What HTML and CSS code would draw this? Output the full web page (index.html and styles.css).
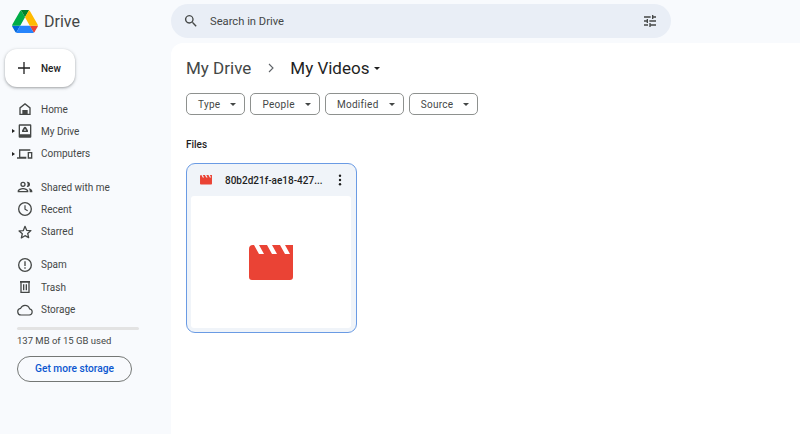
FILE: index.html
```html
<!DOCTYPE html>
<html lang="en">
<head>
<meta charset="utf-8">
<title>My Videos - Google Drive</title>
<link rel="stylesheet" href="styles.css">
</head>
<body>
<div class="app">
  <aside class="sidebar">
    <div class="brand">
      <svg class="logo" viewBox="0 0 87.3 78" width="26" height="23">
        <path d="M6.6 66.85l3.85 6.65c.8 1.4 1.95 2.5 3.3 3.3L27.5 53H0c0 1.55.4 3.1 1.2 4.5z" fill="#0066da"/>
        <path d="M43.65 25L29.9 1.2c-1.35.8-2.5 1.9-3.3 3.3L1.2 48.5C.4 49.9 0 51.45 0 53h27.5z" fill="#00ac47"/>
        <path d="M73.55 76.8c1.35-.8 2.5-1.9 3.3-3.3l1.6-2.75L86.1 57.5c.8-1.4 1.2-2.95 1.2-4.5H59.8l5.85 11.5z" fill="#ea4335"/>
        <path d="M43.65 25L57.4 1.2C56.05.4 54.5 0 52.9 0H34.4c-1.6 0-3.15.45-4.5 1.2z" fill="#00832d"/>
        <path d="M59.8 53H27.5L13.75 76.8c1.35.8 2.9 1.2 4.5 1.2h50.8c1.6 0 3.15-.45 4.5-1.2z" fill="#2684fc"/>
        <path d="M73.4 26.5L60.7 4.5c-.8-1.4-1.95-2.5-3.3-3.3L43.65 25 59.8 53h27.45c0-1.55-.4-3.1-1.2-4.5z" fill="#ffba00"/>
      </svg>
      <span class="brand-name">Drive</span>
    </div>
    <button class="new-btn">
      <svg viewBox="0 0 14 14" width="14" height="14"><path d="M7 1v12M1 7h12" stroke="#1f1f1f" stroke-width="1.3" fill="none"/></svg>
      <span>New</span>
    </button>
    <nav class="nav">
      <div class="nav-group">
        <div class="nav-item"><span class="caret"></span><svg class="ico" viewBox="0 0 24 24"><path d="M12 3L3.500 9.800V21h17V9.800zM5.500 19V10.800L12 5.600l6.500 5.200V19h-2.500v-5.500H8V19z" fill="#444746" fill-rule="evenodd"/></svg><span>Home</span></div>
        <div class="nav-item"><span class="caret show"></span><svg class="ico" viewBox="0 0 24 24"><path d="M4 2h16a1.500 1.500 0 011.500 1.500v17A1.500 1.500 0 0120 22H4a1.500 1.500 0 01-1.500-1.500v-17A1.500 1.500 0 014 2zm.500 2v13h15V4z" fill="#444746" fill-rule="evenodd"/><path d="M12 5.500a2 2 0 011.800 1.100l2.700 4.700-.1 2.200H7.600l-.1-2.200 2.700-4.700A2 2 0 0112 5.500z" fill="#444746"/><circle cx="12" cy="10.500" r="1.300" fill="#f8fafd"/></svg><span>My Drive</span></div>
        <div class="nav-item"><span class="caret show"></span><svg class="ico" viewBox="0 0 24 24"><path d="M3 5h17v2H5v9h9v3H0v-2h3zM16 9h7v10h-7zm2 2v6h3v-6z" fill="#444746" fill-rule="evenodd"/></svg><span>Computers</span></div>
      </div>
      <div class="nav-group">
        <div class="nav-item"><span class="caret"></span><svg class="ico" viewBox="0 0 24 24"><path d="M9 12a4 4 0 100-8 4 4 0 000 8zm0-2a2 2 0 110-4 2 2 0 010 4zm6.500 2a4 4 0 000-8c-.4 0-.7 0-1 .2a6 6 0 010 7.600c.3.100.6.200 1 .200zM9 13.500c-3 0-8 1.500-8 4.500v2h16v-2c0-3-5-4.500-8-4.500zM3 18c.2-.8 3.300-2.500 6-2.500s5.800 1.700 6 2.500zm14-4c1.500 1 2 2.500 2 4v2h4v-2c0-2.300-3.500-3.600-6-4z" fill="#444746" fill-rule="evenodd"/></svg><span>Shared with me</span></div>
        <div class="nav-item"><span class="caret"></span><svg class="ico" viewBox="0 0 24 24"><circle cx="12" cy="12" r="9.500" fill="none" stroke="#444746" stroke-width="2"/><path d="M12 6.500v5.800l4 2.400" fill="none" stroke="#444746" stroke-width="1.800"/></svg><span>Recent</span></div>
        <div class="nav-item"><span class="caret"></span><svg class="ico" viewBox="0 0 24 24"><path d="M12 3.500l2.500 5.900 6.400.500-4.900 4.200 1.500 6.300L12 17.500l-5.500 3.400L8 14.600 3.100 10.400l6.400-.500z" fill="none" stroke="#444746" stroke-width="1.900" stroke-linejoin="round"/></svg><span>Starred</span></div>
      </div>
      <div class="nav-group">
        <div class="nav-item"><span class="caret"></span><svg class="ico" viewBox="0 0 24 24"><circle cx="12" cy="12" r="9.500" fill="none" stroke="#444746" stroke-width="2"/><path d="M11 6.500h2v7h-2zM11 15.500h2v2h-2z" fill="#444746"/></svg><span>Spam</span></div>
        <div class="nav-item"><span class="caret"></span><svg class="ico" viewBox="0 0 24 24"><path d="M4.500 3h15v2.500H19V21H5V5.500h-.5zM7 5.500V19h10V5.500zM9 8h2v9H9zm4 0h2v9h-2z" fill="#444746" fill-rule="evenodd"/></svg><span>Trash</span></div>
        <div class="nav-item"><span class="caret"></span><svg class="ico" viewBox="0 0 24 24"><path d="M6 19.500a5 5 0 01-.6-9.950A7.200 7.200 0 0112 5a7.200 7.200 0 016.900 5.200 4.700 4.700 0 01-.4 9.300z" fill="none" stroke="#444746" stroke-width="1.800"/></svg><span>Storage</span></div>
      </div>
    </nav>
    <div class="storage">
      <div class="meter"></div>
      <div class="usage">137 MB of 15 GB used</div>
      <button class="more-btn">Get more storage</button>
    </div>
  </aside>
  <div class="content">
    <header class="topbar">
      <div class="search">
        <svg class="search-ico" viewBox="0 0 24 24"><path d="M15.500 14h-.8l-.3-.3A6.500 6.500 0 109.500 16a6.500 6.500 0 004.200-1.600l.3.300v.8l5 5 1.500-1.500zm-6 0a4.500 4.500 0 110-9 4.500 4.500 0 010 9z" fill="#444746"/></svg>
        <span class="search-text">Search in Drive</span>
        <svg class="tune-ico" viewBox="0 0 24 24"><path d="M3 17v2h6v-2zM3 5v2h10V5zm10 16v-2h8v-2h-8v-2h-2v6zM7 9v2H3v2h4v2h2V9zm14 4v-2H11v2zm-6-4h2V7h4V5h-4V3h-2z" fill="#444746"/></svg>
      </div>
    </header>
    <main class="main">
      <div class="crumbs">
        <span class="crumb">My Drive</span>
        <svg class="sep" viewBox="0 0 8 12"><path d="M2 2l4 4-4 4" fill="none" stroke="#5f6368" stroke-width="1.100"/></svg>
        <span class="crumb current">My Videos</span>
        <span class="drop big"></span>
      </div>
      <div class="filters">
        <button class="chip">Type<span class="drop"></span></button>
        <button class="chip">People<span class="drop"></span></button>
        <button class="chip">Modified<span class="drop"></span></button>
        <button class="chip">Source<span class="drop"></span></button>
      </div>
      <h2 class="section">Files</h2>
      <article class="card">
        <div class="card-head">
          <svg class="clap small" viewBox="0 0 44 35"><path d="M44 0v32a3 3 0 01-3 3H3a3 3 0 01-3-3V4a4 4 0 014-4h1l5 9h5l-5-9h8l5 9h5l-5-9h8l5 9h5l-5-9z" fill="#ea4335"/></svg>
          <span class="file-name">80b2d21f-ae18-427...</span>
          <svg class="more" viewBox="0 0 4 14"><circle cx="2" cy="2" r="1.400"/><circle cx="2" cy="7" r="1.400"/><circle cx="2" cy="12" r="1.400"/></svg>
        </div>
        <div class="preview">
          <svg class="clap" viewBox="0 0 44 35"><path d="M44 0v32a3 3 0 01-3 3H3a3 3 0 01-3-3V4a4 4 0 014-4h1l5 9h5l-5-9h8l5 9h5l-5-9h8l5 9h5l-5-9z" fill="#ea4335"/></svg>
        </div>
      </article>
    </main>
  </div>
</div>
</body>
</html>
```
FILE: styles.css
```css
* { box-sizing: border-box; }
html, body { margin: 0; height: 100%; }
body {
  background: #f8fafd;
  font-family: Roboto, "Liberation Sans", sans-serif;
  color: #444746;
  overflow: hidden;
}
button { font-family: inherit; cursor: pointer; }
.app { display: flex; height: 434px; }

.sidebar { width: 171px; flex: none; display: flex; flex-direction: column; }
.brand { display: flex; align-items: center; height: 43px; padding: 0 0 1px 12px; gap: 6px; }
.logo { display: block; }
.brand-name { font-size: 16px; color: #444746; }
.new-btn {
  margin: 6px 0 0 5px;
  width: 70px;
  height: 38px;
  border: 0;
  border-radius: 12px;
  background: #fff;
  box-shadow: 0 1px 2px rgba(60,64,67,.3), 0 1px 3px 1px rgba(60,64,67,.15);
  display: flex;
  align-items: center;
  padding: 0 0 0 12px;
  gap: 10px;
  font-size: 10px;
  font-weight: 500;
  color: #1f1f1f;
}
.nav { margin-top: 11px; display: flex; flex-direction: column; gap: 11px; }
.nav-item { height: 22.3px; display: flex; align-items: center; font-size: 10px; }
.caret { width: 0; height: 0; margin-left: 12px; border: 2px solid transparent; border-left: 3px solid transparent; border-right: 0; flex: none; }
.caret.show { border-left-color: #1f1f1f; }
.ico { width: 16px; height: 16px; margin: 0 8px 0 2px; flex: none; }

.storage { padding: 6px 0 0 17px; }
.meter { width: 122px; height: 3px; background: #e3e3e3; border-radius: 2px; }
.usage { font-size: 9.500px; margin-top: 4px; line-height: 14px; }
.more-btn {
  margin-top: 8px;
  width: 115px;
  height: 26px;
  border: 1px solid #747775;
  border-radius: 13px;
  background: transparent;
  color: #0b57d0;
  font-size: 10.200px;
  font-weight: 500;
  padding: 0;
}

.content { flex: 1; display: flex; flex-direction: column; min-width: 0; }
.topbar { height: 43px; flex: none; padding-top: 4px; }
.search {
  width: 500px;
  height: 34px;
  border-radius: 17px;
  background: #e9eef6;
  display: flex;
  align-items: center;
  padding: 0 13px 0 12px;
  font-size: 11.200px;
}
.search-ico { width: 16px; height: 16px; flex: none; }
.search-text { margin-left: 11px; flex: 1; }
.tune-ico { width: 16px; height: 16px; flex: none; }

.main { flex: 1; background: #fff; border-radius: 12px 0 0 0; padding: 13px 15px 0; }
.crumbs { display: flex; align-items: center; height: 24px; }
.crumb { font-size: 17px; color: #444746; }
.crumb.current { color: #1f1f1f; }
.sep { width: 8px; height: 12px; margin: 0 15px 0 16px; }
.drop { display: inline-block; width: 0; height: 0; border: 3px solid transparent; border-top: 3px solid #444746; border-bottom: 0; }
.drop.big { margin-left: 5px; border-width: 3.500px; border-bottom: 0; border-top-color: #1f1f1f; }

.filters { display: flex; gap: 5px; margin-top: 13px; }
.chip {
  height: 22px;
  border: 1px solid #8e918f;
  border-radius: 5px;
  background: #fff;
  color: #444746;
  font-size: 10px;
  letter-spacing: .3px;
  padding: 0 8px 0 11px;
  display: flex;
  align-items: center;
  gap: 10px;
}
.section { margin: 23px 0 0; font-size: 10px; font-weight: 500; color: #1f1f1f; line-height: 14px; }
.card {
  margin-top: 11px;
  width: 171px;
  height: 170px;
  border: 1px solid #6a9be4;
  border-radius: 9px;
  background: #f0f4f9;
  padding: 0 5px 4px 4px;
  display: flex;
  flex-direction: column;
}
.card-head { height: 32px; flex: none; display: flex; align-items: center; padding: 0 0 0 9px; }
.clap { width: 44px; height: 35px; display: block; }
.clap.small { width: 12px; height: 9.500px; flex: none; }
.file-name { margin-left: 13px; flex: 1; font-size: 10px; font-weight: 500; color: #1f1f1f; white-space: nowrap; letter-spacing: 0; }
.more { width: 4px; height: 12px; fill: #1f1f1f; margin-right: 9px; flex: none; }
.preview { flex: 1; background: #fff; border-radius: 3px; display: flex; align-items: center; justify-content: center; }
```
